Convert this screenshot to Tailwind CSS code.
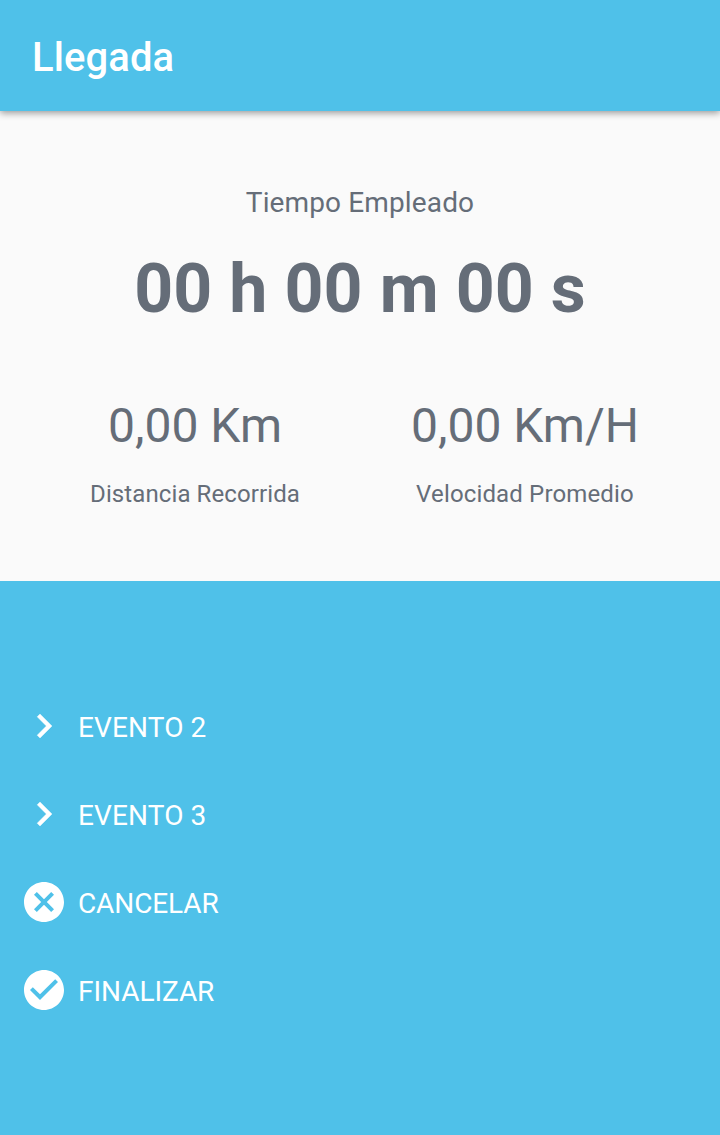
<!DOCTYPE html>
<html lang="es">

<head>
    <meta charset="UTF-8" />
    <meta name="viewport" content="width=device-width, initial-scale=1.0" />
    <title>Llegada</title>
    <script src="https://cdn.jsdelivr.net/npm/@tailwindcss/browser@4"></script>
</head>

<body class="bg-[#fafafa] font-[Roboto,sans-serif]">
    <div class="flex flex-col h-[1135px] overflow-hidden">
        <header class="relative h-[111px] shrink-0 bg-[#4fc1e9] px-8 flex items-center shadow-[0_2px_7px_rgba(0,0,0,0.4)]">
            <h1 class="text-[40px] leading-none font-medium tracking-[0.1px] text-white pt-[5px]">Llegada</h1>
        </header>

        <!-- Summary -->
        <main class="h-[470px] shrink-0 text-[#656d78] text-center">
            <p class="pt-[74px] text-[28px] leading-9 tracking-[0.13px]">Tiempo Empleado</p>
            <p class="mt-7 text-[68px] leading-[80px] font-bold tracking-[0.08px] whitespace-nowrap">00 h 00 m 00 s</p>
            <div class="mt-[69px] px-[30px] grid grid-cols-2">
                <div>
                    <p class="text-[48px] leading-[56px]">0,00 Km</p>
                    <p class="mt-[26px] text-[24px] leading-7 tracking-[0.1px]">Distancia Recorrida</p>
                </div>
                <div>
                    <p class="text-[48px] leading-[56px]">0,00 Km/H</p>
                    <p class="mt-[26px] text-[24px] leading-7 tracking-[0.15px]">Velocidad Promedio</p>
                </div>
            </div>
        </main>

        <!-- Actions -->
        <nav class="flex-1 bg-[#4fc1e9] text-white text-[28px] pt-[101px] pl-5">
            <button class="flex items-center h-[88px] gap-[10px]">
                <svg class="size-12" viewBox="0 0 24 24" fill="currentColor">
                    <path d="M10 6L8.59 7.41 13.17 12l-4.58 4.59L10 18l6-6z" stroke="currentColor" stroke-width="0.2" />
                </svg>
                <span class="pt-1 tracking-[0.12px]">EVENTO 2</span>
            </button>
            <button class="flex items-center h-[88px] gap-[10px]">
                <svg class="size-12" viewBox="0 0 24 24" fill="currentColor">
                    <path d="M10 6L8.59 7.41 13.17 12l-4.58 4.59L10 18l6-6z" stroke="currentColor" stroke-width="0.2" />
                </svg>
                <span class="pt-1 tracking-[0.12px]">EVENTO 3</span>
            </button>
            <button class="flex items-center h-[88px] gap-[10px]">
                <svg class="size-12" viewBox="0 0 24 24" fill="currentColor">
                    <path d="M12 2C6.47 2 2 6.47 2 12s4.47 10 10 10 10-4.47 10-10S17.53 2 12 2zm5 13.59L15.59 17 12 13.41 8.41 17 7 15.59 10.59 12 7 8.41 8.41 7 12 10.59 15.59 7 17 8.41 13.41 12 17 15.59z" />
                </svg>
                <span class="pt-1 tracking-[-0.1px]">CANCELAR</span>
            </button>
            <button class="flex items-center h-[88px] gap-[10px]">
                <svg class="size-12" viewBox="0 0 24 24" fill="currentColor">
                    <path d="M12 2C6.48 2 2 6.48 2 12s4.48 10 10 10 10-4.48 10-10S17.52 2 12 2zm-2 15l-5-5 1.41-1.41L10 14.17l7.59-7.59L19 8l-9 9z" />
                </svg>
                <span class="pt-1 tracking-[-0.05px]">FINALIZAR</span>
            </button>
        </nav>
    </div>
</body>

</html>
